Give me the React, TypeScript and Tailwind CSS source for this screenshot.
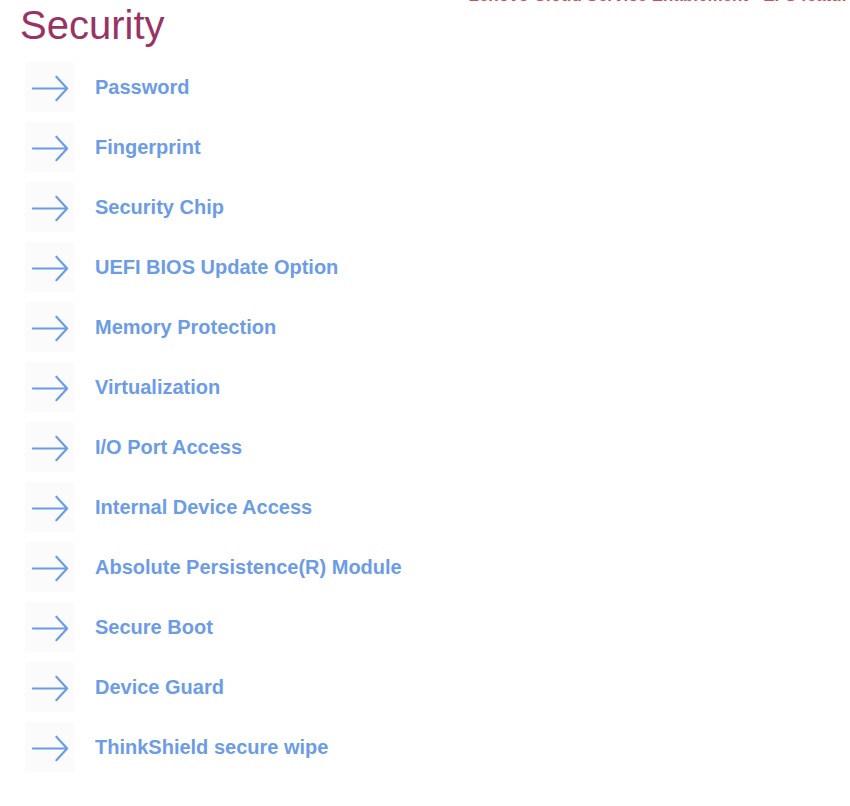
import { type JSX } from "react";

const items = [
  "Password",
  "Fingerprint",
  "Security Chip",
  "UEFI BIOS Update Option",
  "Memory Protection",
  "Virtualization",
  "I/O Port Access",
  "Internal Device Access",
  "Absolute Persistence(R) Module",
  "Secure Boot",
  "Device Guard",
  "ThinkShield secure wipe",
];

function Arrow(): JSX.Element {
  return (
    <svg width="50" height="50" viewBox="0 0 50 50" fill="none">
      <path
        d="M8 26.5H43M32 14.5L43 26.5L32 38.5"
        stroke="#6c9ce6"
        strokeWidth="2.2"
        strokeLinecap="round"
        strokeLinejoin="round"
      />
    </svg>
  );
}

export default function App(): JSX.Element {
  return (
    <div
      className="h-[806px] w-[850px] overflow-hidden bg-white"
      style={{ fontFamily: '"Liberation Sans", Arial, sans-serif' }}
    >
      {/* header strip */}
      <div className="flex items-start">
        <h1 className="ml-[20px] mt-[2px] text-[40px] leading-[46px] text-[#983465]">
          Security
        </h1>
        <div className="ml-[304px] -mt-[14px] whitespace-nowrap text-[17px] font-bold leading-[19px] text-[#cc5450]">
          Lenovo Cloud Service Enablement - EFS feature
        </div>
      </div>

      {/* item list */}
      <ul className="mt-[14px] flex flex-col gap-[10px] pl-[25px]">
        {items.map((label) => (
          <li key={label} className="flex h-[50px] items-center">
            <div className="flex h-[50px] w-[49px] items-center justify-center bg-[#fbfbfc]">
              <Arrow />
            </div>
            <span className="ml-[21px] text-[20px] font-bold text-[#6c9ce6]">
              {label}
            </span>
          </li>
        ))}
      </ul>
    </div>
  );
}
